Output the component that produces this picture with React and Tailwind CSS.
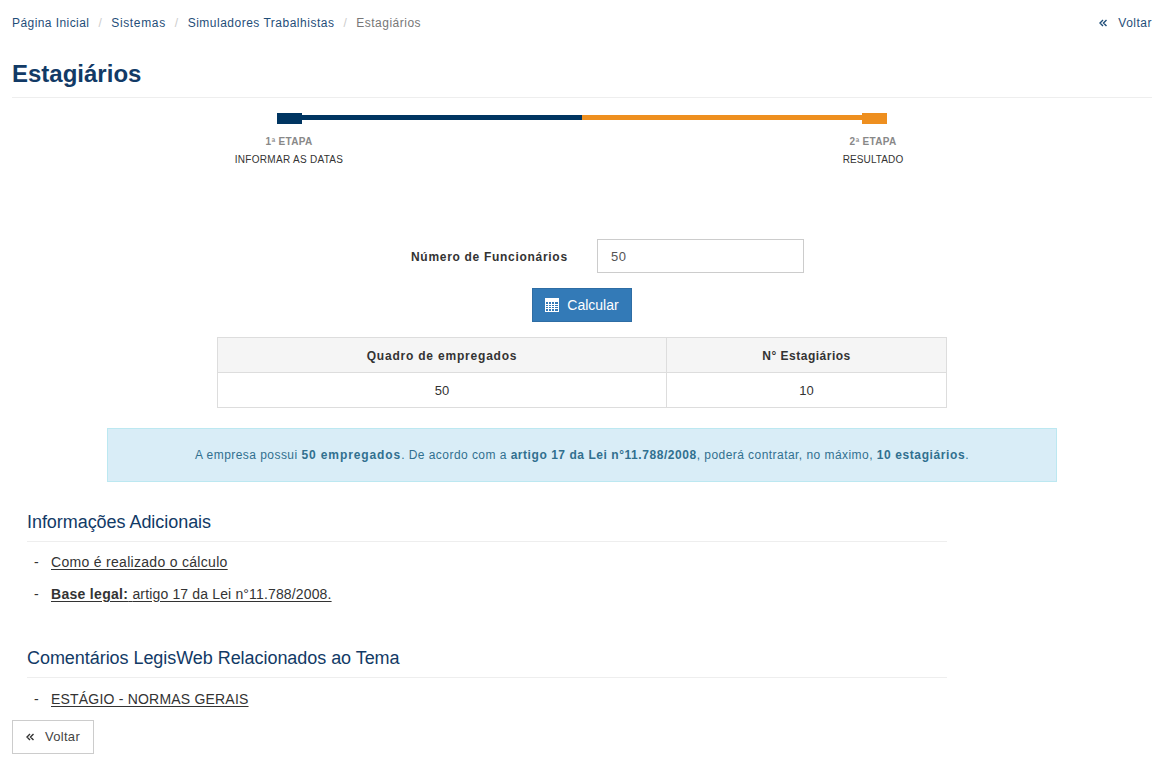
import React from "react";

const F = "font-['Liberation_Sans',Arial,sans-serif]";

function Calc() {
  return (
    <svg width="14" height="14" viewBox="0 0 14 14" className="shrink-0" fill="none" stroke="#fff" strokeWidth="1">
      <rect x="0.5" y="0.5" width="13" height="13" />
      <rect x="0.5" y="0.5" width="13" height="3" fill="#fff" />
      <path d="M0.5 6.5H13.5M0.5 8.5H13.5M0.5 10.5H13.5M3.5 3.5V13.5M6.5 3.5V13.5M9.5 3.5V13.5" />
    </svg>
  );
}

function Chev({ color }) {
  return (
    <svg width="8" height="8" viewBox="0 0 8 8" fill="none" stroke={color} strokeWidth="1.4" className="shrink-0">
      <path d="M4 1L1 4L4 7M7.5 1L4.5 4L7.5 7" />
    </svg>
  );
}

function Section({ title, children, className }) {
  return (
    <section className={className}>
      <h3 className="text-[18px] leading-[20px] font-normal text-[#123a66] tracking-[-0.05px] pb-[9px] border-b border-[#eeeeee]">{title}</h3>
      {children}
    </section>
  );
}

function Item({ children, className = "" }) {
  return (
    <li className={`flex h-[32px] items-center text-[14px] text-[#333333] pl-[7px] ${className}`}>
      <span className="w-[17px]">-</span>
      <a className="underline underline-offset-2">{children}</a>
    </li>
  );
}

export default function App() {
  return (
    <div className={`${F} w-[1164px] h-[767px] overflow-hidden bg-white px-[12px] text-[#333333] text-[14px] tracking-[0.3px]`}>
      <div className="flex justify-between items-center h-[45px] text-[12px] tracking-[0.5px] text-[#1f4e79]">
        <nav className="flex items-center">
          <a className="tracking-[0.43px]">Página Inicial</a>
          <span className="text-[#cccccc] mx-[9px]">/</span>
          <a className="tracking-[0.65px]">Sistemas</a>
          <span className="text-[#cccccc] mx-[9px]">/</span>
          <a>Simuladores Trabalhistas</a>
          <span className="text-[#cccccc] mx-[9px]">/</span>
          <span className="text-[#777777]">Estagiários</span>
        </nav>
        <a className="flex items-center gap-[11px]"><Chev color="#1f4e79" />Voltar</a>
      </div>

      <h1 className="text-[24px] leading-[26px] font-bold text-[#123a66] tracking-[0px] mt-[16px] pb-[10px] border-b border-[#eeeeee]">Estagiários</h1>

      <div className="relative w-[610px] h-[141px] ml-[265px]">
        <div className="flex items-center h-[11px] mt-[15px] absolute top-0 left-0 w-full">
          <div className="w-[25px] h-[11px] bg-[#003561]" />
          <div className="flex-1 h-[5px] mb-[2px] bg-[#003561]" />
          <div className="flex-1 h-[5px] mb-[2px] bg-[#ee8f1f]" />
          <div className="w-[25px] h-[11px] bg-[#ee8f1f]" />
        </div>
        <div className="absolute left-[-53px] top-[37px] w-[130px] text-center text-[10px] tracking-[0.3px]">
          <div className="font-bold text-[#888888] h-[18px] leading-[14px]">1ª ETAPA</div>
          <div className="leading-[14px]">INFORMAR AS DATAS</div>
        </div>
        <div className="absolute left-[531px] top-[37px] w-[130px] text-center text-[10px] tracking-[0.1px]">
          <div className="font-bold text-[#888888] h-[18px] leading-[14px] tracking-[0.3px]">2ª ETAPA</div>
          <div className="leading-[14px]">RESULTADO</div>
        </div>
      </div>

      <div className="flex items-center h-[34px] ml-[399px]">
        <label className="text-[12px] font-bold w-[186px] tracking-[0.7px] pt-[2px]">Número de Funcionários</label>
        <div className="w-[207px] h-[34px] border border-[#cccccc] flex items-center px-[13px] pt-[1px] text-[#555555] text-[13px] tracking-[0.5px]">50</div>
      </div>

      <div className="flex justify-center mt-[15px]">
        <button className="w-[100px] h-[34px] bg-[#337ab7] border border-[#2e6da4] text-white text-[14px] flex items-center justify-center gap-[8px] tracking-[0px]">
          <Calc />Calcular
        </button>
      </div>

      <table className="mt-[15px] ml-[205px] w-[730px] border-collapse text-[13px] text-center tracking-[0.1px]">
        <thead>
          <tr className="h-[35px] bg-[#f5f5f5]">
            <th className="border border-[#dddddd] w-[449px] text-[12px] tracking-[0.8px] pt-[1px]">Quadro de empregados</th>
            <th className="border border-[#dddddd] text-[12px] tracking-[0.5px] pt-[1px]">N° Estagiários</th>
          </tr>
        </thead>
        <tbody>
          <tr className="h-[35px]">
            <td className="border border-[#dddddd] pt-[1px]">50</td>
            <td className="border border-[#dddddd] pt-[1px]">10</td>
          </tr>
        </tbody>
      </table>

      <div className="mt-[20px] ml-[95px] w-[950px] h-[54px] bg-[#d9edf7] border border-[#bce8f1] text-[#31708f] text-[12px] tracking-[0.45px] flex items-center justify-center">
        <p>A empresa possui <b className="tracking-[0.9px]">50 empregados</b>. De acordo com a <b className="tracking-[0.55px]">artigo 17 da Lei n°11.788/2008</b>, poderá contratar, no máximo, <b className="tracking-[0.6px]">10 estagiários</b>.</p>
      </div>

      <div className="ml-[15px] w-[920px]">
        <Section title="Informações Adicionais" className="mt-[30px]">
          <ul className="mt-[4px]">
            <Item>Como é realizado o cálculo</Item>
            <Item><b>Base legal:</b> <span className="tracking-[0.15px]">artigo 17 da Lei n°11.788/2008.</span></Item>
          </ul>
        </Section>
        <Section title="Comentários LegisWeb Relacionados ao Tema" className="mt-[38px]">
          <ul className="mt-[5px]">
            <Item className="tracking-[0.2px]">ESTÁGIO - NORMAS GERAIS</Item>
          </ul>
        </Section>
      </div>

      <button className="mt-[5px] w-[82px] h-[34px] border border-[#cccccc] bg-white flex items-center justify-center gap-[11px] text-[13px] text-[#444444]">
        <Chev color="#333333" />Voltar
      </button>
    </div>
  );
}
